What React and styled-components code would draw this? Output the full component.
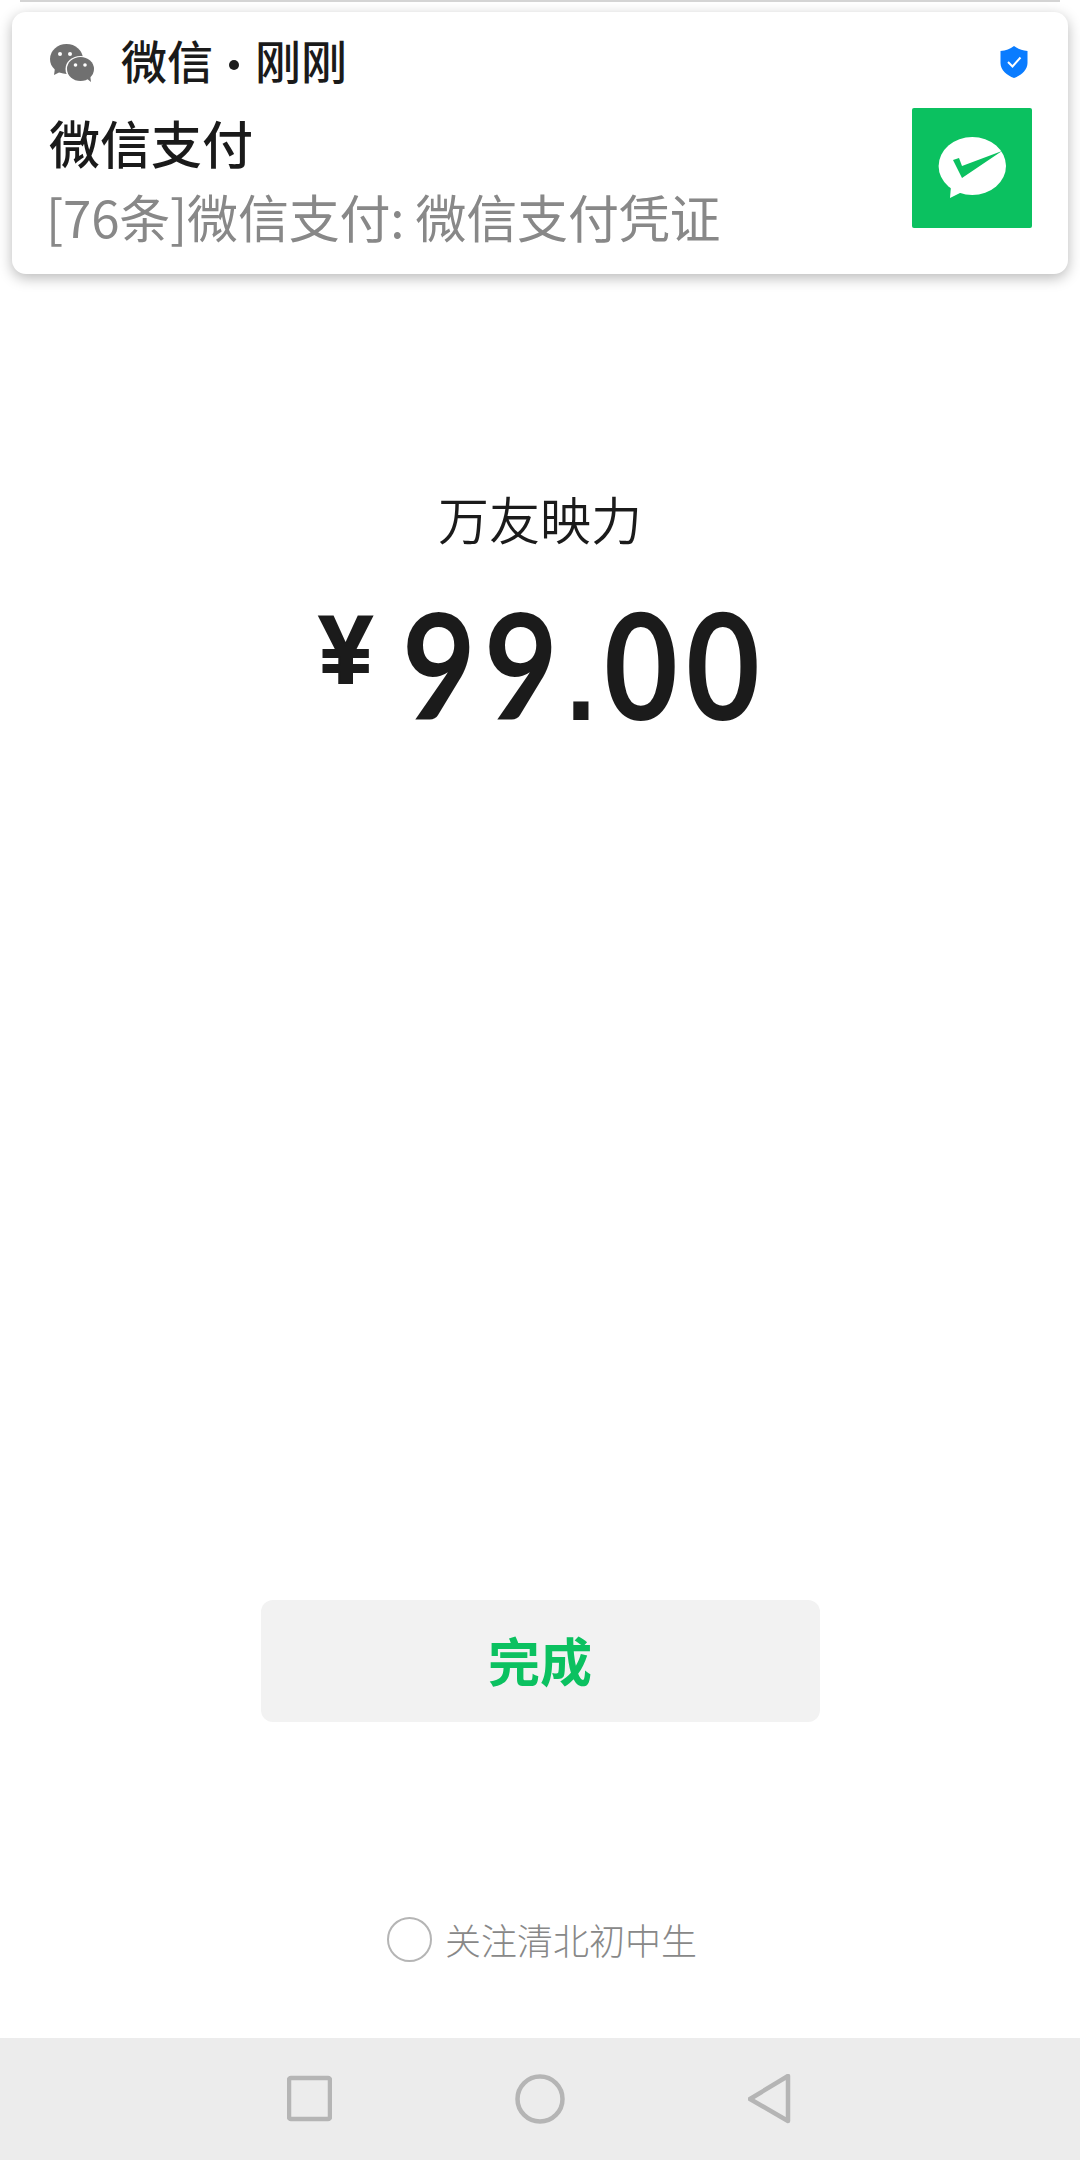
import React from 'react'
import styled, { createGlobalStyle } from 'styled-components'

const GlobalStyle = createGlobalStyle`
html, body {
  margin: 0;
  padding: 0;
  background: #fff;
}
* {
  box-sizing: border-box;
}
`

const CJK = `"Noto Sans CJK SC", "Noto Sans", sans-serif`

const Page = styled.div`
width: 1080px;
height: 2160px;
display: flex;
flex-direction: column;
background: #fff;
font-family: ${CJK};
overflow: hidden;
`

const PeekEdge = styled.div`
height: 2px;
margin: 0 20px;
background: #d4d4d4;
`

const Notification = styled.div`
height: 262px;
margin: 10px 12px 0;
padding: 28px 36px 0 37px;
display: flex;
justify-content: space-between;
background: #fff;
border-radius: 14px;
box-shadow: 0 4px 14px rgba(0, 0, 0, 0.28);
`

const NotificationText = styled.div`
display: flex;
flex-direction: column;
`

const AppRow = styled.div`
height: 46px;
margin-left: 1px;
display: flex;
align-items: center;
`

const AppName = styled.span`
margin: 0 0 8px 27px;
font-size: 46px;
line-height: 46px;
font-weight: 500;
color: #1a1a1a;
`

const Dot = styled.span`
display: inline-block;
width: 10px;
height: 10px;
margin: 0 16px;
border-radius: 50%;
background: #1a1a1a;
vertical-align: 9px;
`

const NotificationTitle = styled.div`
margin-top: 28px;
font-size: 51px;
line-height: 56px;
font-weight: 500;
color: #1a1a1a;
`

const NotificationBody = styled.div`
margin: 18px 0 0 -3px;
font-size: 51px;
line-height: 56px;
font-weight: 400;
letter-spacing: -0.2px;
color: #888;
white-space: nowrap;
`

const NotificationSide = styled.div`
display: flex;
flex-direction: column;
align-items: flex-end;
`

const ShieldIcon = styled.svg`
width: 28px;
height: 32px;
margin: 6px 4px 0 0;
`

const PayThumb = styled.div`
width: 120px;
height: 120px;
margin-top: 30px;
background: #0bc160;
border-radius: 2px;
`

const Main = styled.main`
flex: 1;
display: flex;
flex-direction: column;
align-items: center;
`

const Merchant = styled.div`
margin-top: 210px;
font-size: 51px;
line-height: 68px;
font-weight: 350;
color: #1b1b1b;
`

const Amount = styled.div`
margin: 36px 0 0 7px;
height: 150px;
display: flex;
align-items: flex-start;
color: #1b1b1b;
`

const Currency = styled.span`
margin: 12px 30px 0 0;
font-family: "Liberation Sans", sans-serif;
font-size: 96px;
line-height: 100px;
font-weight: 700;
-webkit-text-stroke: 2px #1b1b1b;
`

const Figure = styled.span`
display: inline-block;
margin-right: -60px;
font-family: Lato, sans-serif;
font-size: 148px;
line-height: 150px;
font-weight: 700;
letter-spacing: 9.5px;
transform: scaleX(0.86);
transform-origin: left center;
`

const Point = styled.span`
font-family: "Liberation Sans", sans-serif;
font-size: 125px;
font-weight: 700;
`

const DoneButton = styled.button`
width: 559px;
height: 122px;
margin-top: 862px;
padding: 0 0 4px;
border: 0;
border-radius: 12px;
background: #f2f2f2;
color: #0bc160;
font-family: ${CJK};
font-size: 52px;
font-weight: 700;
`

const FollowRow = styled.div`
margin: 195px 0 0 4px;
display: flex;
align-items: center;
gap: 13px;
`

const Radio = styled.div`
width: 45px;
height: 45px;
border: 2px solid #b5b5b5;
border-radius: 50%;
`

const FollowLabel = styled.span`
font-size: 36px;
line-height: 45px;
font-weight: 300;
color: #888;
`

const NavBar = styled.nav`
height: 122px;
padding-right: 2px;
display: flex;
align-items: center;
justify-content: center;
gap: 183px;
background: #ececec;
`

const NavIcon = styled.svg`
width: ${(p) => p.$w}px;
height: 50px;
fill: none;
stroke: #b5b5b5;
stroke-width: 4.5;
stroke-linejoin: round;
`

const WeChatLogo = () => (
  <svg width="44" height="38" viewBox="0 0 44 38">
    <ellipse cx="16.5" cy="15" rx="16.5" ry="15" fill="#707070" />
    <path d="M5 24 L4 31 L12 27 Z" fill="#707070" />
    <circle cx="10" cy="10" r="2" fill="#fff" />
    <circle cx="20" cy="10" r="2" fill="#fff" />
    <ellipse cx="30.5" cy="25" rx="15" ry="13" fill="#fff" />
    <ellipse cx="30.5" cy="25" rx="13.5" ry="12" fill="#707070" />
    <path d="M36 34 L41 38 L40 30 Z" fill="#707070" />
    <circle cx="25.5" cy="21" r="1.8" fill="#fff" />
    <circle cx="35" cy="21" r="1.8" fill="#fff" />
  </svg>
)

const PayLogo = () => (
  <svg width="120" height="120" viewBox="0 0 120 120">
    <ellipse cx="60.3" cy="58" rx="33.7" ry="29" fill="#fff" />
    <path d="M39 78 L38 90 L52 83 Z" fill="#fff" />
    <path d="M41 52 L47 50 L50 58 L90 43 L50 70 Z" fill="#0bc160" />
  </svg>
)

const App = () => {
  return (
    <Page>
      <GlobalStyle />
      <PeekEdge />
      <Notification>
        <NotificationText>
          <AppRow>
            <WeChatLogo />
            <AppName>
              微信<Dot />刚刚
            </AppName>
          </AppRow>
          <NotificationTitle>微信支付</NotificationTitle>
          <NotificationBody>[76条]微信支付: 微信支付凭证</NotificationBody>
        </NotificationText>
        <NotificationSide>
          <ShieldIcon viewBox="0 0 28 32">
            <path d="M14 0 C18 3 22 4.5 27.5 5 V17 C27.5 24 21 29.5 14 32 C7 29.5 0.5 24 0.5 17 V5 C6 4.5 10 3 14 0 Z" fill="#0a7cff" />
            <path d="M8 16 L12.5 20.5 L20.5 11.5" fill="none" stroke="#fff" strokeWidth="2" />
          </ShieldIcon>
          <PayThumb>
            <PayLogo />
          </PayThumb>
        </NotificationSide>
      </Notification>
      <Main>
        <Merchant>万友映力</Merchant>
        <Amount>
          <Currency>¥</Currency>
          <Figure>99<Point>.</Point>00</Figure>
        </Amount>
        <DoneButton>完成</DoneButton>
        <FollowRow>
          <Radio />
          <FollowLabel>关注清北初中生</FollowLabel>
        </FollowRow>
      </Main>
      <NavBar>
        <NavIcon $w={45} viewBox="0 0 45 50">
          <rect x="2" y="4" width="41" height="41" rx="2" />
        </NavIcon>
        <NavIcon $w={50} viewBox="0 0 50 50">
          <circle cx="25" cy="25" r="22.5" />
        </NavIcon>
        <NavIcon $w={44} viewBox="0 0 44 50">
          <path d="M40 2 V47 L2 25 Z" />
        </NavIcon>
      </NavBar>
    </Page>
  )
}

export default App
